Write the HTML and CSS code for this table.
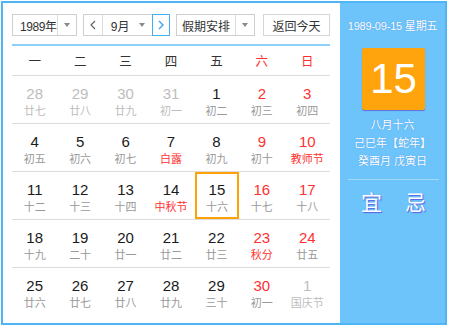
FILE: index.html
```html
<!DOCTYPE html>
<html lang="zh-CN">
<head>
<meta charset="utf-8">
<title>万年历</title>
<link rel="stylesheet" href="styles.css">
</head>
<body>
<div class="cal">
  <div class="main">
    <div class="controls">
      <div class="sel sel-year">
        <span class="sel-text">1989年</span>
        <span class="sel-arrow"><i class="tri"></i></span>
      </div>
      <div class="month-group">
        <span class="nav prev"><svg width="6" height="10" viewBox="0 0 6 10"><polyline points="5,1 1,5 5,9" fill="none" stroke="#666" stroke-width="1.2"/></svg></span>
        <span class="month-sel"><span class="sel-text">9月</span><i class="tri"></i></span>
        <span class="nav next"><svg width="6" height="10" viewBox="0 0 6 10"><polyline points="1,1 5,5 1,9" fill="none" stroke="#3aa6f0" stroke-width="1.4"/></svg></span>
      </div>
      <div class="sel sel-holiday">
        <span class="sel-text">假期安排</span>
        <span class="sel-arrow"><i class="tri"></i></span>
      </div>
      <div class="btn-today">返回今天</div>
    </div>

    <div class="week-head">
      <span>一</span><span>二</span><span>三</span><span>四</span><span>五</span><span class="red">六</span><span class="red">日</span>
    </div>

    <div class="row">
      <div class="cell other"><b>28</b><em>廿七</em></div>
      <div class="cell other"><b>29</b><em>廿八</em></div>
      <div class="cell other"><b>30</b><em>廿九</em></div>
      <div class="cell other"><b>31</b><em>初一</em></div>
      <div class="cell"><b>1</b><em>初二</em></div>
      <div class="cell wk"><b>2</b><em>初三</em></div>
      <div class="cell wk"><b>3</b><em>初四</em></div>
    </div>
    <div class="row">
      <div class="cell"><b>4</b><em>初五</em></div>
      <div class="cell"><b>5</b><em>初六</em></div>
      <div class="cell"><b>6</b><em>初七</em></div>
      <div class="cell fest"><b>7</b><em>白露</em></div>
      <div class="cell"><b>8</b><em>初九</em></div>
      <div class="cell wk"><b>9</b><em>初十</em></div>
      <div class="cell wk fest"><b>10</b><em>教师节</em></div>
    </div>
    <div class="row">
      <div class="cell"><b>11</b><em>十二</em></div>
      <div class="cell"><b>12</b><em>十三</em></div>
      <div class="cell"><b>13</b><em>十四</em></div>
      <div class="cell fest"><b>14</b><em>中秋节</em></div>
      <div class="cell today"><b>15</b><em>十六</em></div>
      <div class="cell wk"><b>16</b><em>十七</em></div>
      <div class="cell wk"><b>17</b><em>十八</em></div>
    </div>
    <div class="row">
      <div class="cell"><b>18</b><em>十九</em></div>
      <div class="cell"><b>19</b><em>二十</em></div>
      <div class="cell"><b>20</b><em>廿一</em></div>
      <div class="cell"><b>21</b><em>廿二</em></div>
      <div class="cell"><b>22</b><em>廿三</em></div>
      <div class="cell wk fest"><b>23</b><em>秋分</em></div>
      <div class="cell wk"><b>24</b><em>廿五</em></div>
    </div>
    <div class="row">
      <div class="cell"><b>25</b><em>廿六</em></div>
      <div class="cell"><b>26</b><em>廿七</em></div>
      <div class="cell"><b>27</b><em>廿八</em></div>
      <div class="cell"><b>28</b><em>廿九</em></div>
      <div class="cell"><b>29</b><em>三十</em></div>
      <div class="cell wk"><b>30</b><em>初一</em></div>
      <div class="cell other"><b>1</b><em>国庆节</em></div>
    </div>
  </div>

  <div class="side">
    <div class="side-date">1989-09-15 星期五</div>
    <div class="big-day">15</div>
    <div class="lunar">
      <div>八月十六</div>
      <div>己巳年【蛇年】</div>
      <div>癸酉月 戊寅日</div>
    </div>
    <div class="side-line"></div>
    <div class="yiji"><span>宜</span><span>忌</span></div>
  </div>
</div>
</body>
</html>
```
FILE: styles.css
```css
html, body {
  margin: 0;
  padding: 0;
  background: #fff;
}
body {
  padding: 1px;
  font-family: "Liberation Sans", "Noto Sans CJK SC", sans-serif;
}
.cal {
  width: 442px;
  border: 2px solid #4fb5f5;
  display: flex;
  background: #fff;
}
.main {
  width: 318px;
  padding: 11px 10px 8px 9px;
}
.controls {
  display: flex;
  height: 22px;
  font-size: 12px;
  color: #333;
}
.sel {
  box-sizing: border-box;
  height: 22px;
  border: 1px solid #cfcfcf;
  display: flex;
  align-items: stretch;
  background: #fff;
}
.sel-text {
  display: flex;
  align-items: center;
  white-space: nowrap;
}
.sel-year {
  width: 65px;
}
.sel-year .sel-text {
  width: 44px;
  padding-left: 7px;
  box-sizing: border-box;
  color: #333;
  letter-spacing: -0.4px;
}
.sel-arrow {
  flex: 1;
  border-left: 1px solid #dcdcdc;
  display: flex;
  align-items: center;
  justify-content: center;
}
.tri {
  display: block;
  width: 0;
  height: 0;
  border-left: 3.5px solid transparent;
  border-right: 3.5px solid transparent;
  border-top: 4px solid #8a8a8a;
}
.month-group {
  margin-left: 6px;
  width: 87px;
  box-sizing: border-box;
  height: 22px;
  border: 1px solid #cfcfcf;
  border-right: none;
  display: flex;
}
.nav {
  display: flex;
  align-items: center;
  justify-content: center;
  box-sizing: border-box;
}
.prev {
  width: 19px;
  border-right: 1px solid #dcdcdc;
}
.month-sel {
  width: 50px;
  display: flex;
  align-items: center;
  padding-left: 8px;
  box-sizing: border-box;
}
.month-sel .sel-text {
  width: 28px;
}
.next {
  width: 18px;
  height: 22px;
  margin-top: -1px;
  border: 1px solid #45aef3;
}
.sel-holiday {
  margin-left: 6px;
  width: 79px;
}
.sel-holiday .sel-text {
  width: 58px;
  justify-content: center;
}
.btn-today {
  margin-left: 8px;
  width: 67px;
  box-sizing: border-box;
  height: 22px;
  border: 1px solid #d6d6d6;
  display: flex;
  align-items: center;
  justify-content: center;
}
.week-head {
  margin-top: 8px;
  border-top: 2px solid #8fd0f8;
  height: 29px;
  display: grid;
  grid-template-columns: repeat(7, 1fr);
  align-items: center;
  text-align: center;
  font-size: 12.5px;
  color: #333;
}
.red {
  color: #ff3030;
}
.row {
  border-top: 1px solid #dcdcdc;
  height: 47px;
  display: grid;
  grid-template-columns: repeat(7, 1fr);
}
.cell {
  display: flex;
  flex-direction: column;
  align-items: center;
  padding-top: 8px;
  box-sizing: border-box;
}
.cell b {
  font-weight: normal;
  font-size: 15px;
  line-height: 19px;
  color: #1a1a1a;
}
.cell em {
  font-style: normal;
  font-size: 11px;
  line-height: 16px;
  color: #999;
}
.cell.wk b {
  color: #ff3030;
}
.cell.fest em {
  color: #ff3030;
}
.cell.other b,
.cell.other em {
  color: #bdbdbd;
}
.cell.today {
  box-shadow: inset 0 0 0 2px #ffa20a;
  margin: 0 0 0 1px;
}
.side {
  width: 105px;
  background: #6cc4fb;
  color: #fff;
  display: flex;
  flex-direction: column;
  align-items: center;
  padding-top: 15px;
}
.side-date {
  font-size: 11px;
  line-height: 16px;
  letter-spacing: -0.2px;
  text-shadow: 0 0 1px rgba(60, 90, 200, 0.5);
}
.big-day {
  margin-top: 14px;
  margin-left: 2px;
  width: 63px;
  height: 62px;
  background: #ffa40c;
  border-radius: 2px;
  box-shadow: 0 1px 1px rgba(90, 80, 210, 0.7);
  display: flex;
  align-items: center;
  justify-content: center;
  font-size: 42px;
  line-height: 1;
}
.lunar {
  margin-top: 6px;
  font-size: 11px;
  line-height: 18px;
  text-align: center;
  text-shadow: 0 0 1px rgba(60, 90, 200, 0.5);
}
.side-line {
  margin-top: 9px;
  width: 91px;
  margin-left: 2px;
  height: 1px;
  background: #a3dafc;
}
.yiji {
  margin-top: 8px;
  margin-left: 2px;
  display: flex;
  gap: 23px;
  font-size: 21px;
  line-height: 30px;
  text-shadow: 1px 1px 1px #5b5de0;
}
```
